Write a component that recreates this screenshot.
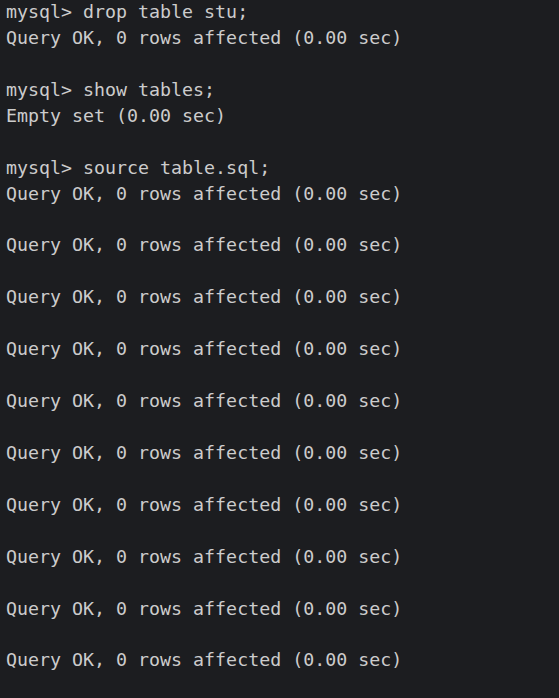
export default function App() {
  const lines = [
    "mysql> drop table stu;",
    "Query OK, 0 rows affected (0.00 sec)",
    "",
    "mysql> show tables;",
    "Empty set (0.00 sec)",
    "",
    "mysql> source table.sql;",
  ];
  for (let i = 0; i < 10; i++) {
    if (i > 0) lines.push("");
    lines.push("Query OK, 0 rows affected (0.00 sec)");
  }
  return (
    <div className="w-[559px] h-[698px] overflow-hidden bg-[#1c1d20] pl-[6px]">
      <div className="-mt-[1px] text-[#cccccc] text-[18.3px] leading-[25.94px] whitespace-pre" style={{ fontFamily: '"DejaVu Sans Mono", "Liberation Mono", monospace' }}>
        {lines.map((l, i) => (
          <div key={i} className="h-[25.94px]">{l}</div>
        ))}
      </div>
    </div>
  );
}
